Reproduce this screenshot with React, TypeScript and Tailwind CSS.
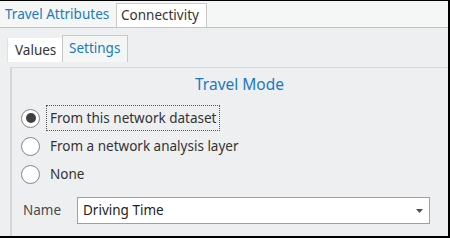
import React from "react";

function Radio({ checked }: { checked?: boolean }) {
  return (
    <div className="ml-[9px] flex h-[19px] w-[19px] shrink-0 items-center justify-center rounded-full border border-[#858585] bg-white">
      {checked ? <div className="h-[10px] w-[10px] rounded-full bg-[#404040]" /> : null}
    </div>
  );
}

export default function App() {
  return (
    <div
      className="flex h-[238px] w-[450px] flex-col overflow-hidden border-t border-r-2 border-b-2 border-black bg-[#eeeff1] text-[13.5px] text-[#333333]"
      style={{ fontFamily: '"Noto Sans", "Open Sans", sans-serif' }}
    >
      {/* top tab strip */}
      <div className="flex h-[27px] shrink-0 items-end border-b border-[#c3c3c3] bg-[#f5f7f6]">
        <div className="flex h-[26px] w-[116px] items-center pl-[5px] text-[#1a79c2]">Travel Attributes</div>
        <div className="flex h-[24px] w-[91px] items-center border border-b-0 border-[#c8c8c8] bg-white pl-[4px]">
          Connectivity
        </div>
      </div>

      {/* second tab row */}
      <div className="flex h-[34px] shrink-0 items-end pl-[7px]">
        <div className="flex h-[24px] w-[55px] items-center border-l border-[#e2e2e2] bg-white pl-[7px]">Values</div>
        <div className="flex h-[27px] w-[66px] items-center border border-b-0 border-[#c8c8c8] bg-[#f4f6f6] pl-[6px] pb-[2px] text-[#1a79c2]">
          Settings
        </div>
      </div>

      {/* panel */}
      <div className="mt-[5px] ml-[10px] flex w-[457px] flex-1 shrink-0 flex-col border-t border-l-2 border-[#d6d7d9]">
        <div className="flex h-[26px] items-end justify-center text-[15.5px] leading-[20px] text-[#1a79c2]">Travel Mode</div>
        <div className="mt-[10px] flex flex-col">
          <div className="flex h-[28px] items-center">
            <Radio checked />
            <div className="ml-[6px] flex h-[26px] items-center border border-dotted border-[#555] px-[3px]">
              From this network dataset
            </div>
          </div>
          <div className="flex h-[28px] items-center">
            <Radio />
            <div className="ml-[10px]">From a network analysis layer</div>
          </div>
          <div className="flex h-[28px] items-center">
            <Radio />
            <div className="ml-[10px]">None</div>
          </div>
        </div>
        <div className="mt-[9px] flex items-center">
          <div className="ml-[11px] w-[54px] text-[#4a4a4a]">Name</div>
          <div className="flex h-[27px] w-[353px] items-center justify-between border border-[#a0a0a0] bg-white pr-[6px] pl-[5px] text-[#222222]">
            <span>Driving Time</span>
            <svg width="7" height="4" viewBox="0 0 7 4">
              <path d="M0 0H7L3.5 4Z" fill="#505050" />
            </svg>
          </div>
        </div>
      </div>
    </div>
  );
}
